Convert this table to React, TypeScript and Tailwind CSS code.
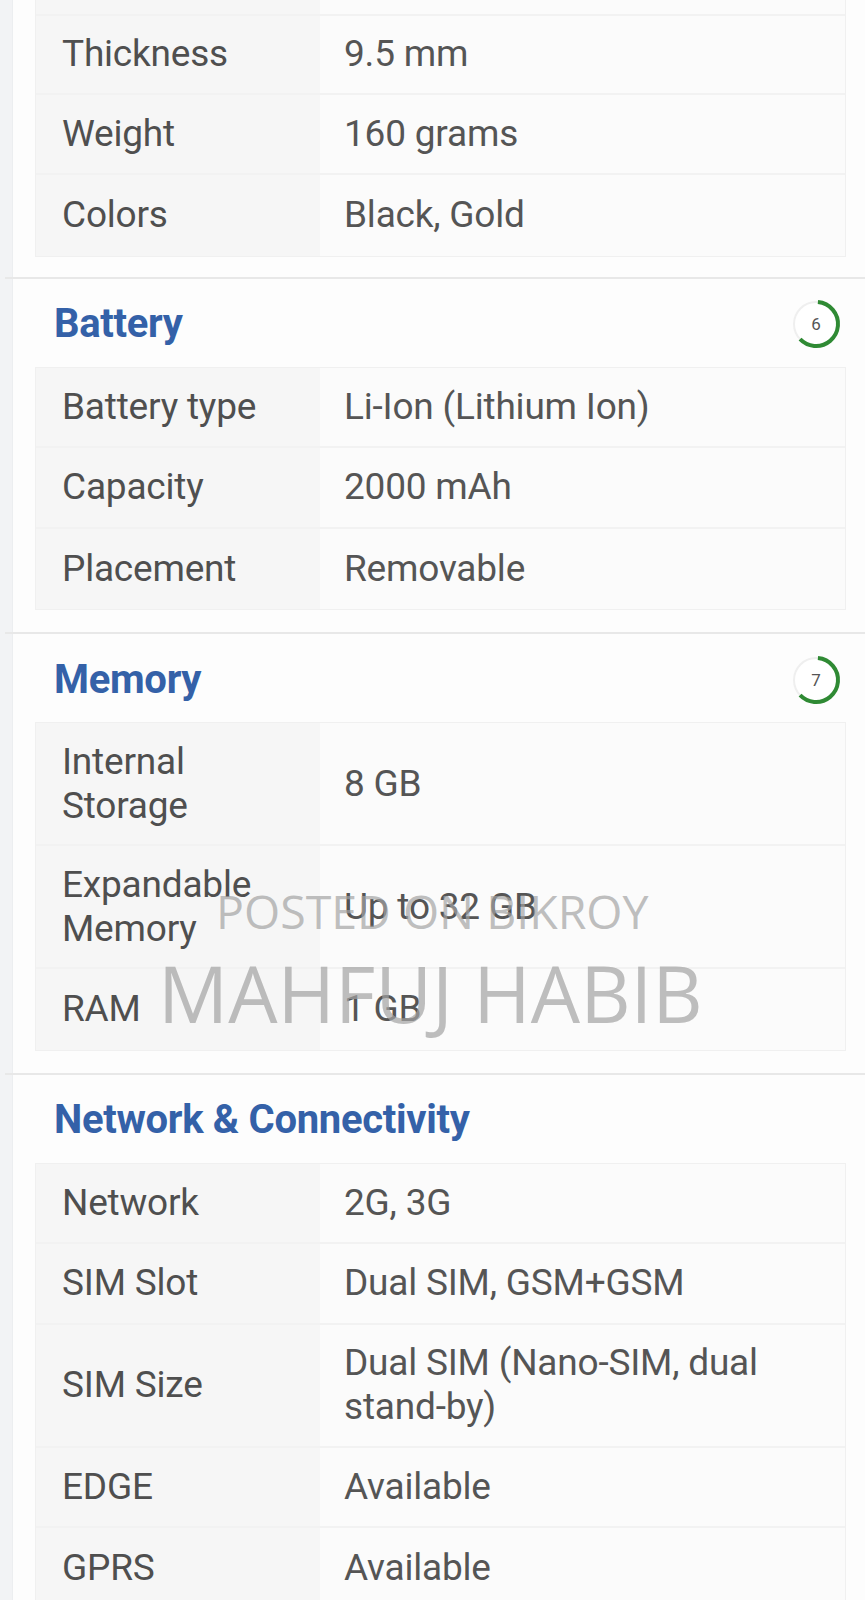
import React from "react";

type Row = { label: string; value: string; tall?: boolean };

const Badge = ({ n }: { n: number }) => {
  const r = 22;
  const c = 2 * Math.PI * r;
  const arc = (220 / 360) * c;
  return (
    <svg width="54" height="54" viewBox="0 0 54 54" className="block">
      <circle cx="27" cy="27" r={r} fill="#ffffff" stroke="#efefef" strokeWidth="2" />
      <circle
        cx="27"
        cy="27"
        r={r}
        fill="none"
        stroke="#2f8a34"
        strokeWidth="4"
        strokeDasharray={`${arc} ${c}`}
        transform="rotate(-85 27 27)"
      />
      <text x="27" y="33" textAnchor="middle" fontSize="17" fill="#555" fontFamily="Roboto, sans-serif">
        {n}
      </text>
    </svg>
  );
};

const RowView = ({ r, last, first }: { r: Row; last: boolean; first?: boolean }) => (
  <div
    className={`flex ${r.tall ? "h-[123px]" : "h-[80.5px]"} ${last ? "" : "border-b-2 border-[#f2f2f2]"} ${first ? "border-t-2 border-[#f2f2f2]" : ""}`}
  >
    <div className="w-[284px] shrink-0 bg-[#f6f6f6] pl-[26px] pr-2 flex items-center text-[37px] leading-[44px] text-[#4f4f4f] tracking-[-0.2px]">
      {r.label}
    </div>
    <div className="flex-1 pl-[24px] pr-6 flex items-center text-[37px] leading-[44px] text-[#555555] tracking-[-0.2px]">
      {r.value}
    </div>
  </div>
);

const Table = ({ rows }: { rows: Row[] }) => (
  <div className="ml-[22px] mr-[19px] border border-[#f0f0f0] bg-[#fbfbfb]">
    {rows.map((r, i) => (
      <RowView key={i} r={r} last={i === rows.length - 1} />
    ))}
  </div>
);

const Section = ({ title, badge, rows }: { title: string; badge?: number; rows: Row[] }) => (
  <div>
    <div className="h-[2px] bg-[#e8e8e8] -ml-[8px]" />
    <div className="h-[88px] pt-[3px] flex items-center justify-between pl-[41px] pr-[22px]">
      <div className="text-[40px] font-bold text-[#3461a8] tracking-[-0.3px]">{title}</div>
      {badge !== undefined && <Badge n={badge} />}
    </div>
    <Table rows={rows} />
    <div className="h-[22px]" />
  </div>
);

export default function App() {
  return (
    <div
      className="relative w-[865px] h-[1600px] overflow-hidden bg-[#fdfdfd] flex"
      style={{ fontFamily: "Roboto, 'Noto Sans', sans-serif" }}
    >
      <div className="w-[13px] shrink-0 bg-[#f2f3f5] border-r border-[#eceef0]" />
      <div className="flex-1 flex flex-col">
        <div>
          <div className="ml-[22px] mr-[19px] h-[14px] flex border-x border-[#f0f0f0]">
            <div className="w-[284px] bg-[#f6f6f6]" />
            <div className="flex-1 bg-[#fbfbfb]" />
          </div>
          <div className="ml-[22px] mr-[19px] border border-t-0 border-[#f0f0f0] bg-[#fbfbfb]">
            {[
              { label: "Thickness", value: "9.5 mm" },
              { label: "Weight", value: "160 grams" },
              { label: "Colors", value: "Black, Gold" },
            ].map((r, i) => (
              <RowView key={i} r={r} last={i === 2} first={i === 0} />
            ))}
          </div>
          <div className="h-[20px]" />
        </div>
        <Section
          title="Battery"
          badge={6}
          rows={[
            { label: "Battery type", value: "Li-Ion (Lithium Ion)" },
            { label: "Capacity", value: "2000 mAh" },
            { label: "Placement", value: "Removable" },
          ]}
        />
        <Section
          title="Memory"
          badge={7}
          rows={[
            { label: "Internal Storage", value: "8 GB", tall: true },
            { label: "Expandable Memory", value: "Up to 32 GB", tall: true },
            { label: "RAM", value: "1 GB" },
          ]}
        />
        <Section
          title="Network & Connectivity"
          rows={[
            { label: "Network", value: "2G, 3G" },
            { label: "SIM Slot", value: "Dual SIM, GSM+GSM" },
            { label: "SIM Size", value: "Dual SIM (Nano-SIM, dual stand-by)", tall: true },
            { label: "EDGE", value: "Available" },
            { label: "GPRS", value: "Available" },
          ]}
        />
      </div>
      <div
        className="absolute left-[216px] top-[883px] text-[46.5px] leading-[56px] font-normal text-[#a3a3a3]/70 whitespace-nowrap pointer-events-none"
        style={{ fontFamily: "'Open Sans', sans-serif" }}
      >
        POSTED ON BIKROY
      </div>
      <div
        className="absolute left-[158px] top-[945px] text-[78px] leading-[96px] font-normal text-[#a3a3a3]/70 whitespace-nowrap pointer-events-none"
        style={{ fontFamily: "'Open Sans', sans-serif" }}
      >
        MAHFUJ HABIB
      </div>
    </div>
  );
}
